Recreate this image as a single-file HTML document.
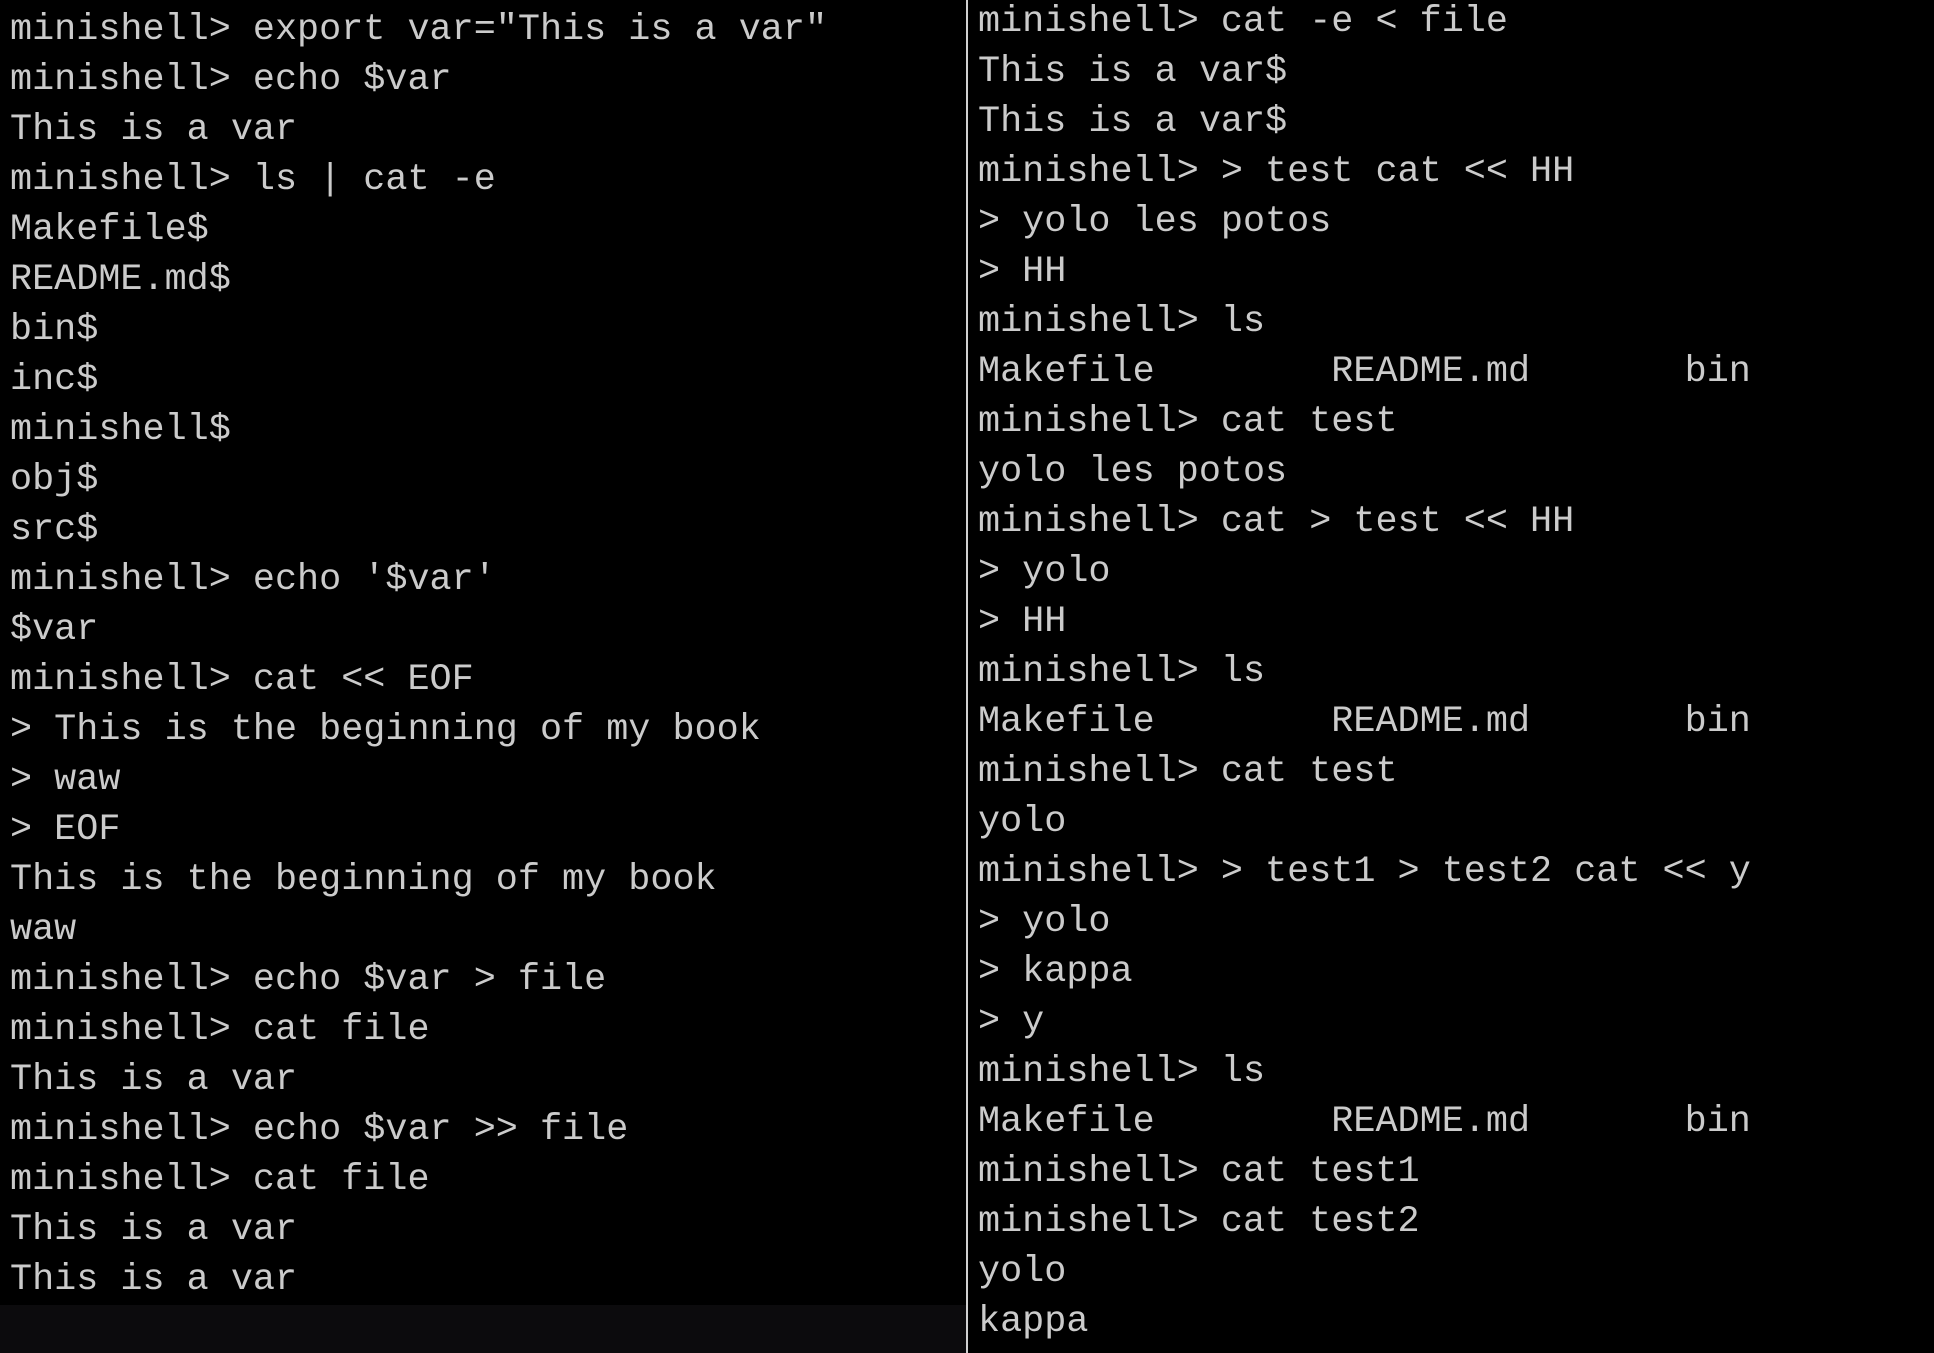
<!DOCTYPE html>
<html><head><meta charset="utf-8"><style>
html,body{margin:0;padding:0;background:#000;width:1934px;height:1353px;overflow:hidden}
.p{position:absolute;font-family:"Liberation Mono",monospace;font-size:36.8px;line-height:50px;color:#cbcbcb;white-space:pre;margin:0}
#l{left:10px;top:5px}
#r{left:978px;top:-3px}
#strip{position:absolute;left:0;top:1305px;width:966px;height:48px;background:#0c0b0d}
#div{position:absolute;left:966px;top:0;width:2px;height:1353px;background:#d0d0d0}
</style></head><body>
<div id="strip"></div>
<div id="div"></div>
<pre class="p" id="l">minishell&gt; export var="This is a var"
minishell&gt; echo $var
This is a var
minishell&gt; ls | cat -e
Makefile$
README.md$
bin$
inc$
minishell$
obj$
src$
minishell&gt; echo '$var'
$var
minishell&gt; cat &lt;&lt; EOF
&gt; This is the beginning of my book
&gt; waw
&gt; EOF
This is the beginning of my book
waw
minishell&gt; echo $var &gt; file
minishell&gt; cat file
This is a var
minishell&gt; echo $var &gt;&gt; file
minishell&gt; cat file
This is a var
This is a var</pre>
<pre class="p" id="r">minishell&gt; cat -e &lt; file
This is a var$
This is a var$
minishell&gt; &gt; test cat &lt;&lt; HH
&gt; yolo les potos
&gt; HH
minishell&gt; ls
Makefile        README.md       bin
minishell&gt; cat test
yolo les potos
minishell&gt; cat &gt; test &lt;&lt; HH
&gt; yolo
&gt; HH
minishell&gt; ls
Makefile        README.md       bin
minishell&gt; cat test
yolo
minishell&gt; &gt; test1 &gt; test2 cat &lt;&lt; y
&gt; yolo
&gt; kappa
&gt; y
minishell&gt; ls
Makefile        README.md       bin
minishell&gt; cat test1
minishell&gt; cat test2
yolo
kappa</pre>
</body></html>
